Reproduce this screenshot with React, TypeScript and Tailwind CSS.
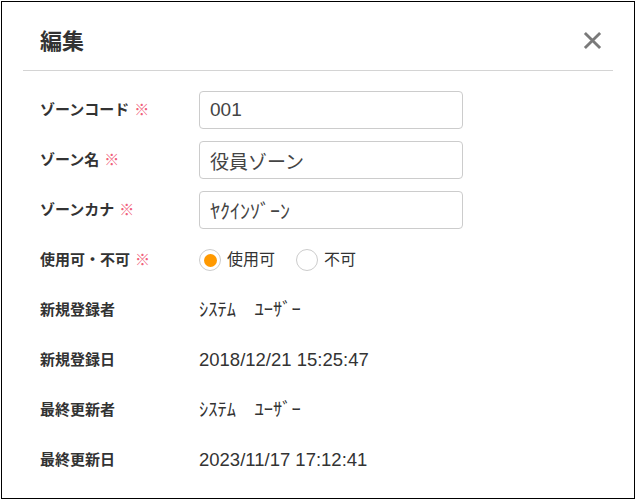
import { useState } from 'react';

const font = "font-['Liberation_Sans','Noto_Sans_CJK_JP',sans-serif]";

function Label({ text, required }: { text: string; required?: boolean }) {
  return (
    <div className="w-[159px] shrink-0 text-[15px] font-bold text-[#333]">
      {text}
      {required && <span className="ml-[5px] font-normal text-[#f0607a]">※</span>}
    </div>
  );
}

function Radio({ label, checked, onClick }: { label: string; checked: boolean; onClick: () => void }) {
  return (
    <button type="button" onClick={onClick} className="flex items-center gap-[6px]">
      <span className="w-[22px] h-[22px] rounded-full border border-[#ccc] bg-white flex items-center justify-center">
        {checked && <span className="w-[13px] h-[13px] rounded-full bg-[#ff9900]"></span>}
      </span>
      <span className="text-[16px] text-[#333]">{label}</span>
    </button>
  );
}

export default function App() {
  const [usable, setUsable] = useState(true);

  const info = [
    { label: '新規登録者', value: 'ｼｽﾃﾑ　ﾕｰｻﾞｰ' },
    { label: '新規登録日', value: '2018/12/21 15:25:47' },
    { label: '最終更新者', value: 'ｼｽﾃﾑ　ﾕｰｻﾞｰ' },
    { label: '最終更新日', value: '2023/11/17 17:12:41' },
  ];

  return (
    <div className={`p-px bg-white ${font}`}>
      <div className="w-[634px] h-[498px] border border-black bg-white">
        <div className="mx-[21px] h-[69px] border-b border-[#d4d4d4] flex items-center justify-between pl-[17px] pr-[11px] pt-[10px]">
          <h1 className="text-[22px] font-bold text-[#333]">編集</h1>
          <svg className="w-[19px] h-[19px] mt-[-2px]" viewBox="0 0 20 20" fill="none" stroke="#7a7a7a" strokeWidth={3}>
            <path d="M2 2 L18 18 M18 2 L2 18" />
          </svg>
        </div>

        <div className="pl-[38px] pt-[14px]">
          <div className="h-[50px] flex items-center">
            <Label text="ゾーンコード" required />
            <input
              defaultValue="001"
              className="w-[264px] h-[38px] border border-[#ccc] rounded-[4px] px-[10px] text-[19px] text-[#444] outline-none"
            />
          </div>
          <div className="h-[50px] flex items-center">
            <Label text="ゾーン名" required />
            <input
              defaultValue="役員ゾーン"
              className="w-[264px] h-[38px] border border-[#ccc] rounded-[4px] px-[10px] text-[19px] text-[#444] outline-none"
            />
          </div>
          <div className="h-[50px] flex items-center">
            <Label text="ゾーンカナ" required />
            <input
              defaultValue="ﾔｸｲﾝｿﾞｰﾝ"
              className="w-[264px] h-[38px] border border-[#ccc] rounded-[4px] px-[10px] text-[20px] text-[#444] outline-none"
            />
          </div>
          <div className="h-[50px] flex items-center">
            <Label text="使用可・不可" required />
            <div className="flex items-center gap-[21px]">
              <Radio label="使用可" checked={usable} onClick={() => setUsable(true)} />
              <Radio label="不可" checked={!usable} onClick={() => setUsable(false)} />
            </div>
          </div>
          {info.map((row) => (
            <div key={row.label} className="h-[50px] flex items-center">
              <Label text={row.label} />
              <div className="text-[18.5px] text-[#333] whitespace-pre">{row.value}</div>
            </div>
          ))}
        </div>
      </div>
    </div>
  );
}
